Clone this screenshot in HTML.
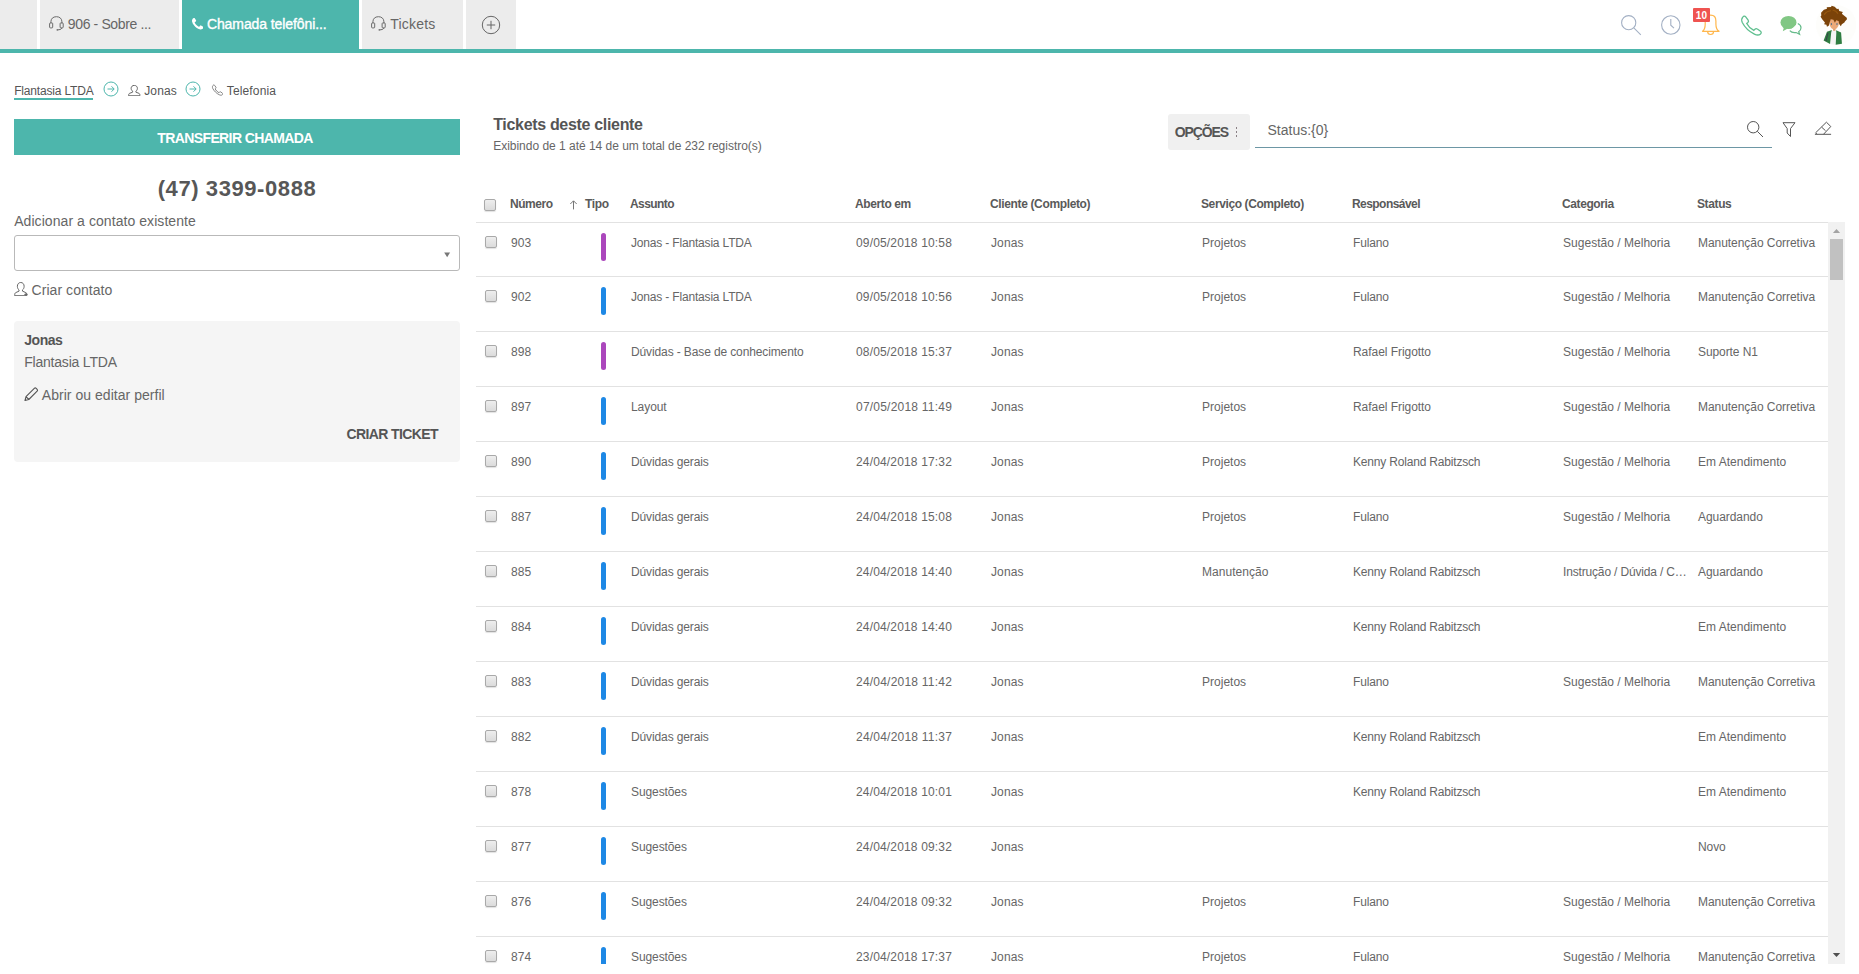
<!DOCTYPE html>
<html lang="pt-BR"><head><meta charset="utf-8"><title>Chamada telefônica</title>
<style>
html,body{margin:0;padding:0;background:#fff}
body{width:1859px;height:974px;position:relative;overflow:hidden;font-family:"Liberation Sans",sans-serif}
.t{position:absolute;white-space:nowrap}
</style></head><body>
<div style="position:absolute;left:0px;top:0px;width:37px;height:49px;background:#ececec;"></div>
<div style="position:absolute;left:40px;top:0px;width:139px;height:49px;background:#ececec;"></div>
<div style="position:absolute;left:182px;top:0px;width:177px;height:49px;background:#4db6ac;"></div>
<div style="position:absolute;left:362px;top:0px;width:101px;height:49px;background:#ececec;"></div>
<div style="position:absolute;left:466px;top:0px;width:50px;height:49px;background:#ececec;"></div>
<div style="position:absolute;left:0px;top:49px;width:1859px;height:4px;background:#4db6ac;"></div>
<svg style="position:absolute;left:49.4px;top:15.8px;" width="15" height="15" viewBox="0 0 15 15" fill="none"><path d="M1.900 7.300V5.800C1.900 2.700 4 0.700 7.400 0.700S12.900 2.700 12.900 5.800V7.300" stroke="#6a6a6a" stroke-width="1"/><rect x="0.600" y="6.900" width="3.100" height="5" rx="0.800" stroke="#6a6a6a" stroke-width="1"/><rect x="11.100" y="6.900" width="3.100" height="5" rx="0.800" stroke="#6a6a6a" stroke-width="1"/><path d="M12.900 11.900q-0.500 2-4 2" stroke="#6a6a6a" stroke-width="1"/><circle cx="8.300" cy="13.900" r="0.800" fill="#6a6a6a"/></svg>
<span class="t" id="t1" style="left:67.8px;top:14.15px;font-size:14px;line-height:20px;color:#666;letter-spacing:-0.366px;">906 - Sobre ...</span>
<svg style="position:absolute;left:191.5px;top:18px;" width="11.5" height="11.5" viewBox="192 128 1408 1408" fill="none"><path d="M1600 1240q0 27-10 70.500t-21 68.500q-21 50-122 106-94 51-186 51-27 0-53-3.500t-57.500-12.500-47-14.500-55.500-20.500-49-18q-98-35-175-83-127-79-264-216t-216-264q-48-77-83-175-3-9-18-49t-20.500-55.500-14.500-47-12.500-57.500-3.500-53q0-92 51-186 56-101 106-122 25-11 68.500-21t70.500-10q14 0 21 3 18 6 53 76 11 19 30 54t35 63.500 31 53.500q3 4 17.500 25t21.500 35.500 7 28.500q0 20-28.500 50t-62 55-62 53-28.500 46q0 9 5 22.500t8.500 20.500 14 24 11.500 19q76 137 174 235t235 174q2 1 19 11.500t24 14 20.500 8.500 22.500 5q18 0 46-28.500t53-62 55-62 50-28.500q14 0 28.500 7t35.500 21.500 25 17.500q25 15 53.500 31t63.500 35 54 30q70 35 76 53 3 7 3 21z" fill="#fff"/></svg>
<span class="t" id="t2" style="left:206.9px;top:14.15px;font-size:14px;line-height:20px;color:#fff;letter-spacing:-0.089px;-webkit-text-stroke:0.35px #fff;">Chamada telefôni...</span>
<svg style="position:absolute;left:371.4px;top:15.8px;" width="15" height="15" viewBox="0 0 15 15" fill="none"><path d="M1.900 7.300V5.800C1.900 2.700 4 0.700 7.400 0.700S12.900 2.700 12.900 5.800V7.300" stroke="#6a6a6a" stroke-width="1"/><rect x="0.600" y="6.900" width="3.100" height="5" rx="0.800" stroke="#6a6a6a" stroke-width="1"/><rect x="11.100" y="6.900" width="3.100" height="5" rx="0.800" stroke="#6a6a6a" stroke-width="1"/><path d="M12.900 11.900q-0.500 2-4 2" stroke="#6a6a6a" stroke-width="1"/><circle cx="8.300" cy="13.900" r="0.800" fill="#6a6a6a"/></svg>
<span class="t" id="t3" style="left:390.3px;top:14.15px;font-size:14px;line-height:20px;color:#666;letter-spacing:0.208px;">Tickets</span>
<svg style="position:absolute;left:480px;top:14px;" width="22" height="22" viewBox="0 0 22 22" fill="none"><circle cx="11" cy="11" r="8.7" stroke="#666" stroke-width="1"/><path d="M11 6.8v8.4M6.8 11h8.400" stroke="#666" stroke-width="1"/></svg>
<svg style="position:absolute;left:1619px;top:13px;" width="24" height="24" viewBox="0 0 24 24" fill="none"><circle cx="9.700" cy="9.700" r="7.100" stroke="#a3b0c4" stroke-width="1.100"/><path d="M14.800 14.800L21.800 21.800" stroke="#a3b0c4" stroke-width="1.100"/></svg>
<svg style="position:absolute;left:1659px;top:13px;" width="24" height="24" viewBox="0 0 24 24" fill="none"><circle cx="11.800" cy="12" r="9.200" stroke="#a3b0c4" stroke-width="1.100"/><path d="M11.800 6v6.200l3.200 3" stroke="#a3b0c4" stroke-width="1.100"/></svg>
<svg style="position:absolute;left:1699px;top:13px;" width="24" height="24" viewBox="0 0 24 24" fill="none"><path d="M3.500 18.300C5.500 17 6.200 15 6.200 11V8C6.200 4.500 8.500 2.200 11.600 2.200S16.900 4.500 16.900 8V11C16.900 15 17.600 17 20.100 18.300Z" stroke="#ffb74d" stroke-width="1.200" stroke-linejoin="round"/><path d="M8.600 18.500a3 3 0 0 0 6 0" stroke="#ffb74d" stroke-width="1.200"/></svg>
<div style="position:absolute;left:1693px;top:8px;width:17px;height:14px;background:#ef5350;border-radius:1px;"></div>
<span class="t" id="t4" style="left:1701.5px;top:8.54px;font-size:10px;line-height:14px;color:#fff;font-weight:700;letter-spacing:0.180px;transform:translateX(-50%);">10</span>
<svg style="position:absolute;left:1739px;top:13px;" width="24" height="24" viewBox="0 0 24 24" fill="none"><path d="M3.500 3.500c1-1.300 2.300-1.400 3.200-0.300l2.600 3.600c0.700 1 0.500 1.800-0.300 2.600l-1.200 1.100c1.600 3.200 4.300 5.800 7.600 7.600l1.200-1.300c0.800-0.800 1.700-0.900 2.600-0.200l3.400 2.500c1.100 0.900 1 2.200-0.300 3.200-1.600 1.300-3.600 1.200-6.300-0.100C10.500 19.500 5.500 14.500 3 9.500 2 7 2.200 5 3.500 3.500z" stroke="#5fbf8f" stroke-width="1.400" transform="translate(0.500 0.900) scale(0.930 0.910)"/></svg>
<svg style="position:absolute;left:1779px;top:13px;" width="24" height="24" viewBox="0 0 24 24" fill="none"><ellipse cx="9.500" cy="9.500" rx="8" ry="6.600" fill="#81c784"/><path d="M5 14l-1.200 4.200 5-2.800z" fill="#81c784"/><path d="M18.800 10.500c2.200 1 3.200 2.600 3.200 4.300 0 1.700-0.900 3-2.300 3.900l0.900 2.600-3.500-1.800c-2.500 0.400-5-0.300-6.300-1.900" stroke="#66bb8a" stroke-width="1.200" fill="#fff"/></svg>
<svg style="position:absolute;left:1809px;top:0px;" width="50" height="50" viewBox="0 0 974 974" fill="none"><circle cx="527" cy="487" r="392" fill="#fdfdfb"/><path d="M470 560h45v70h-45z" fill="#dc9866"/><polygon points="440,600 530,600 520,870 410,855" fill="#f4f4f4"/><polygon points="445,585 350,620 285,790 410,855 432,640" fill="#2f7d42"/><polygon points="528,590 625,635 642,850 520,872 532,640" fill="#2f7d42"/><path d="M370 640L330 800" stroke="#3a3a4a" stroke-width="18"/><path d="M395 440c0-60 40-90 95-90s95 30 95 90c0 70-45 135-95 135s-95-65-95-135z" fill="#eba97a"/><ellipse cx="437" cy="468" rx="13" ry="22" fill="#56748c"/><ellipse cx="545" cy="468" rx="13" ry="22" fill="#56748c"/><polygon points="235,250 290,190 350,170 345,140 430,135 440,110 500,130 545,175 575,170 590,215 660,235 640,270 735,345 740,375 700,420 690,440 640,470 620,510 590,470 575,410 530,395 505,445 475,385 425,375 405,430 385,500 350,520 340,480 295,470 310,440 260,380 235,340 225,320 240,300" fill="#7b4309"/><path d="M300 280q40-60 120-70M470 200q60 10 90 60" stroke="#96570f" stroke-width="22" stroke-linecap="round"/></svg>
<span class="t" id="t5" style="left:14.2px;top:83.34px;font-size:12px;line-height:17px;color:#555;letter-spacing:-0.174px;">Flantasia LTDA</span>
<div style="position:absolute;left:14px;top:98px;width:79px;height:2px;background:#4db6ac;"></div>
<svg style="position:absolute;left:102.8px;top:80.8px;" width="16" height="16" viewBox="0 0 16 16" fill="none"><circle cx="8" cy="8" r="7" stroke="#4db6ac" stroke-width="1"/><path d="M4.500 8h6.500M8.500 5.300L11.200 8 8.500 10.700" stroke="#4db6ac" stroke-width="1"/></svg>
<svg style="position:absolute;left:127.8px;top:84.7px;" width="12.8" height="11.3" viewBox="0 0 14.300 14.500" preserveAspectRatio="none" fill="none"><path d="M7 0.500C9.200 0.500 10.500 2.200 10.500 4.300C10.500 6 9.700 7.400 8.800 8V9.200L12.200 10.700C13 11.100 13.300 11.800 13.300 13.800H0.700C0.700 11.800 1 11.100 1.800 10.700L5.200 9.200V8C4.300 7.400 3.500 6 3.500 4.300C3.500 2.200 4.800 0.500 7 0.500Z" stroke="#666" stroke-width="1" vector-effect="non-scaling-stroke"/></svg>
<span class="t" id="t6" style="left:144.2px;top:83.34px;font-size:12px;line-height:17px;color:#555;letter-spacing:0.156px;">Jonas</span>
<svg style="position:absolute;left:185.4px;top:80.8px;" width="16" height="16" viewBox="0 0 16 16" fill="none"><circle cx="8" cy="8" r="7" stroke="#4db6ac" stroke-width="1"/><path d="M4.500 8h6.500M8.500 5.300L11.200 8 8.500 10.700" stroke="#4db6ac" stroke-width="1"/></svg>
<svg style="position:absolute;left:210.8px;top:84px;" width="12.5" height="12.5" viewBox="0 0 24 24" fill="none"><path d="M3.500 3.500c1-1.300 2.300-1.400 3.200-0.300l2.600 3.600c0.700 1 0.500 1.800-0.300 2.600l-1.200 1.100c1.600 3.200 4.300 5.800 7.600 7.600l1.200-1.300c0.800-0.800 1.700-0.900 2.600-0.200l3.400 2.500c1.100 0.900 1 2.200-0.300 3.200-1.600 1.300-3.600 1.200-6.300-0.100C10.500 19.500 5.500 14.500 3 9.500 2 7 2.200 5 3.500 3.500z" stroke="#777" stroke-width="1.800" transform="translate(0.500 -0.500) scale(0.95)"/></svg>
<span class="t" id="t7" style="left:226.8px;top:83.34px;font-size:12px;line-height:17px;color:#555;letter-spacing:0.141px;">Telefonia</span>
<div style="position:absolute;left:14px;top:119px;width:446px;height:36px;background:#4db6ac;"></div>
<span class="t" id="t8" style="left:235px;top:128.05px;font-size:14px;line-height:20px;color:#fff;font-weight:700;letter-spacing:-0.616px;transform:translateX(-50%);">TRANSFERIR CHAMADA</span>
<span class="t" id="t9" style="left:237px;top:172.88px;font-size:22px;line-height:31px;color:#575757;font-weight:700;letter-spacing:0.581px;transform:translateX(-50%);">(47) 3399-0888</span>
<span class="t" id="t10" style="left:14.2px;top:211.15px;font-size:14px;line-height:20px;color:#666;letter-spacing:0.066px;">Adicionar a contato existente</span>
<div style="position:absolute;left:14px;top:235px;width:444px;height:34px;border:1px solid #b9b9b9;border-radius:3px;background:#fff"></div>
<svg style="position:absolute;left:444px;top:252px;" width="7" height="6" viewBox="0 0 7 6" fill="none"><polygon points="0.200,0.400 6.100,0.400 3.150,5.200" fill="#777"/></svg>
<svg style="position:absolute;left:14px;top:281.7px;" width="13.8" height="14.4" viewBox="0 0 14.300 14.500" preserveAspectRatio="none" fill="none"><path d="M7 0.500C9.200 0.500 10.500 2.200 10.500 4.300C10.500 6 9.700 7.400 8.800 8V9.200L12.200 10.700C13 11.100 13.300 11.800 13.300 13.800H0.700C0.700 11.800 1 11.100 1.800 10.700L5.200 9.200V8C4.300 7.400 3.500 6 3.500 4.300C3.500 2.200 4.800 0.500 7 0.500Z" stroke="#666" stroke-width="1" vector-effect="non-scaling-stroke"/><path d="M12.400 10.800v3.400M10.700 12.500h3.400" stroke="#666" stroke-width="1" vector-effect="non-scaling-stroke"/><path d="M10.200 13.800h3.600" stroke="#fff" stroke-width="0"/></svg>
<span class="t" id="t11" style="left:31.6px;top:280.15px;font-size:14px;line-height:20px;color:#666;letter-spacing:0.047px;">Criar contato</span>
<div style="position:absolute;left:14px;top:321px;width:446px;height:141px;background:#f5f5f5;border-radius:4px;"></div>
<span class="t" id="t12" style="left:24.2px;top:330.15px;font-size:14px;line-height:20px;color:#555;font-weight:700;letter-spacing:-0.441px;">Jonas</span>
<span class="t" id="t13" style="left:24.2px;top:352.15px;font-size:14px;line-height:20px;color:#666;letter-spacing:-0.204px;">Flantasia LTDA</span>
<svg style="position:absolute;left:24px;top:387px;" width="14.5" height="14.5" viewBox="0 0 14.500 14.500" fill="none"><path d="M1 13.500l1-3.800 8.300-8.300c0.600-0.600 1.300-0.600 1.900 0l0.900 0.900c0.600 0.600 0.600 1.300 0 1.900L4.800 12.500z M2 9.700l2.800 2.800" stroke="#555" stroke-width="1.100" stroke-linejoin="round"/></svg>
<span class="t" id="t14" style="left:41.8px;top:385.15px;font-size:14px;line-height:20px;color:#666;letter-spacing:0.032px;">Abrir ou editar perfil</span>
<span class="t" id="t15" style="left:346.5px;top:424.15px;font-size:14px;line-height:20px;color:#555;font-weight:700;letter-spacing:-0.618px;">CRIAR TICKET</span>
<span class="t" id="t16" style="left:493.2px;top:113.96px;font-size:16px;line-height:22px;color:#555;font-weight:700;letter-spacing:-0.321px;">Tickets deste cliente</span>
<span class="t" id="t17" style="left:493.2px;top:138.34px;font-size:12px;line-height:17px;color:#666;letter-spacing:-0.018px;">Exibindo de 1 até 14 de um total de 232 registro(s)</span>
<div style="position:absolute;left:1168px;top:114px;width:82px;height:36px;background:#f0f0f0;border-radius:3px;"></div>
<span class="t" id="t18" style="left:1174.8px;top:122.15px;font-size:14px;line-height:20px;color:#555;font-weight:700;letter-spacing:-1.141px;">OPÇÕES</span>
<div style="position:absolute;left:1236px;top:127.2px;width:1px;height:1.6px;background:#8a8085;"></div>
<div style="position:absolute;left:1236px;top:131.2px;width:1px;height:1.6px;background:#8a8085;"></div>
<div style="position:absolute;left:1236px;top:135.2px;width:1px;height:1.6px;background:#8a8085;"></div>
<div style="position:absolute;left:1255px;top:147px;width:517px;height:1px;background:#6d97a5;"></div>
<span class="t" id="t19" style="left:1267.5px;top:120.15px;font-size:14px;line-height:20px;color:#666;letter-spacing:0.005px;">Status:{0}</span>
<svg style="position:absolute;left:1746px;top:120px;" width="18" height="18" viewBox="0 0 18 18" fill="none"><circle cx="7.200" cy="7.200" r="5.700" stroke="#555" stroke-width="1"/><path d="M11.300 11.300L17 17" stroke="#555" stroke-width="1"/></svg>
<svg style="position:absolute;left:1781px;top:122px;" width="16" height="16" viewBox="0 0 16 16" fill="none"><path d="M2 0.700H14L9.500 6.600V14.500L6.200 11V6.600Z" stroke="#555" stroke-width="1" stroke-linejoin="round"/></svg>
<svg style="position:absolute;left:1814px;top:120px;" width="18" height="17" viewBox="0 0 18 17" fill="none"><path d="M0.900 14.300H17.100M9.500 14.300L16.800 6.500 12.400 2.200 1.600 12.800 3.100 14.300M7.700 7.200L11.500 10.700" stroke="#555" stroke-width="1" stroke-linejoin="round"/></svg>
<div style="position:absolute;left:484px;top:199px;width:10px;height:10px;border:1px solid #a9a9a9;border-radius:2px;background:linear-gradient(#eeeeee,#dbdbdb);box-shadow:0 1px 1px rgba(0,0,0,0.12)"></div>
<span class="t" id="t20" style="left:510px;top:195.64px;font-size:12px;line-height:17px;color:#5a5a5a;font-weight:700;letter-spacing:-0.466px;">Número</span>
<svg style="position:absolute;left:568px;top:198px;" width="11" height="12" viewBox="0 0 11 12" fill="none"><path d="M5.500 11.400V3M2.300 6L5.500 2.800 8.700 6" stroke="#777" stroke-width="1"/></svg>
<span class="t" id="t21" style="left:585px;top:195.64px;font-size:12px;line-height:17px;color:#5a5a5a;font-weight:700;letter-spacing:-0.315px;">Tipo</span>
<span class="t" id="t22" style="left:630px;top:195.64px;font-size:12px;line-height:17px;color:#5a5a5a;font-weight:700;letter-spacing:-0.574px;">Assunto</span>
<span class="t" id="t23" style="left:855px;top:195.64px;font-size:12px;line-height:17px;color:#5a5a5a;font-weight:700;letter-spacing:-0.390px;">Aberto em</span>
<span class="t" id="t24" style="left:990px;top:195.64px;font-size:12px;line-height:17px;color:#5a5a5a;font-weight:700;letter-spacing:-0.358px;">Cliente (Completo)</span>
<span class="t" id="t25" style="left:1201px;top:195.64px;font-size:12px;line-height:17px;color:#5a5a5a;font-weight:700;letter-spacing:-0.396px;">Serviço (Completo)</span>
<span class="t" id="t26" style="left:1352px;top:195.64px;font-size:12px;line-height:17px;color:#5a5a5a;font-weight:700;letter-spacing:-0.557px;">Responsável</span>
<span class="t" id="t27" style="left:1562px;top:195.64px;font-size:12px;line-height:17px;color:#5a5a5a;font-weight:700;letter-spacing:-0.395px;">Categoria</span>
<span class="t" id="t28" style="left:1697px;top:195.64px;font-size:12px;line-height:17px;color:#5a5a5a;font-weight:700;letter-spacing:-0.380px;">Status</span>
<div style="position:absolute;left:476px;top:222px;width:1352px;height:1px;background:#e2e2e2;"></div>
<div style="position:absolute;left:0;top:223px;width:1859px;height:741px;overflow:hidden">
<div style="position:absolute;left:476px;top:53px;width:1352px;height:1px;background:#e2e2e2;"></div>
<div style="position:absolute;left:485px;top:13px;width:10px;height:10px;border:1px solid #a9a9a9;border-radius:2px;background:linear-gradient(#eeeeee,#dbdbdb);box-shadow:0 1px 1px rgba(0,0,0,0.12)"></div>
<div style="position:absolute;left:601px;top:10px;width:5px;height:28px;background:#ab47bc;border-radius:2.500px;"></div>
<span class="t" id="t29" style="left:511px;top:12.14px;font-size:12px;line-height:17px;color:#666;letter-spacing:0.020px;">903</span>
<span class="t" id="t30" style="left:631px;top:12.14px;font-size:12px;line-height:17px;color:#666;letter-spacing:-0.177px;">Jonas - Flantasia LTDA</span>
<span class="t" id="t31" style="left:856px;top:12.14px;font-size:12px;line-height:17px;color:#666;letter-spacing:0.164px;">09/05/2018 10:58</span>
<span class="t" id="t32" style="left:991px;top:12.14px;font-size:12px;line-height:17px;color:#666;letter-spacing:0.110px;">Jonas</span>
<span class="t" id="t33" style="left:1202px;top:12.14px;font-size:12px;line-height:17px;color:#666;letter-spacing:0.014px;">Projetos</span>
<span class="t" id="t34" style="left:1353px;top:12.14px;font-size:12px;line-height:17px;color:#666;letter-spacing:-0.151px;">Fulano</span>
<span class="t" id="t35" style="left:1563px;top:12.14px;font-size:12px;line-height:17px;color:#666;letter-spacing:0.025px;">Sugestão / Melhoria</span>
<span class="t" id="t36" style="left:1698px;top:12.14px;font-size:12px;line-height:17px;color:#666;letter-spacing:-0.048px;">Manutenção Corretiva</span>
<div style="position:absolute;left:476px;top:108px;width:1352px;height:1px;background:#e2e2e2;"></div>
<div style="position:absolute;left:485px;top:67px;width:10px;height:10px;border:1px solid #a9a9a9;border-radius:2px;background:linear-gradient(#eeeeee,#dbdbdb);box-shadow:0 1px 1px rgba(0,0,0,0.12)"></div>
<div style="position:absolute;left:601px;top:64px;width:5px;height:28px;background:#1e88e5;border-radius:2.500px;"></div>
<span class="t" id="t37" style="left:511px;top:66.14px;font-size:12px;line-height:17px;color:#666;letter-spacing:0.020px;">902</span>
<span class="t" id="t38" style="left:631px;top:66.14px;font-size:12px;line-height:17px;color:#666;letter-spacing:-0.177px;">Jonas - Flantasia LTDA</span>
<span class="t" id="t39" style="left:856px;top:66.14px;font-size:12px;line-height:17px;color:#666;letter-spacing:0.164px;">09/05/2018 10:56</span>
<span class="t" id="t40" style="left:991px;top:66.14px;font-size:12px;line-height:17px;color:#666;letter-spacing:0.110px;">Jonas</span>
<span class="t" id="t41" style="left:1202px;top:66.14px;font-size:12px;line-height:17px;color:#666;letter-spacing:0.014px;">Projetos</span>
<span class="t" id="t42" style="left:1353px;top:66.14px;font-size:12px;line-height:17px;color:#666;letter-spacing:-0.151px;">Fulano</span>
<span class="t" id="t43" style="left:1563px;top:66.14px;font-size:12px;line-height:17px;color:#666;letter-spacing:0.025px;">Sugestão / Melhoria</span>
<span class="t" id="t44" style="left:1698px;top:66.14px;font-size:12px;line-height:17px;color:#666;letter-spacing:-0.048px;">Manutenção Corretiva</span>
<div style="position:absolute;left:476px;top:163px;width:1352px;height:1px;background:#e2e2e2;"></div>
<div style="position:absolute;left:485px;top:122px;width:10px;height:10px;border:1px solid #a9a9a9;border-radius:2px;background:linear-gradient(#eeeeee,#dbdbdb);box-shadow:0 1px 1px rgba(0,0,0,0.12)"></div>
<div style="position:absolute;left:601px;top:119px;width:5px;height:28px;background:#ab47bc;border-radius:2.500px;"></div>
<span class="t" id="t45" style="left:511px;top:121.14px;font-size:12px;line-height:17px;color:#666;letter-spacing:0.020px;">898</span>
<span class="t" id="t46" style="left:631px;top:121.14px;font-size:12px;line-height:17px;color:#666;letter-spacing:-0.120px;">Dúvidas - Base de conhecimento</span>
<span class="t" id="t47" style="left:856px;top:121.14px;font-size:12px;line-height:17px;color:#666;letter-spacing:0.164px;">08/05/2018 15:37</span>
<span class="t" id="t48" style="left:991px;top:121.14px;font-size:12px;line-height:17px;color:#666;letter-spacing:0.110px;">Jonas</span>
<span class="t" id="t49" style="left:1353px;top:121.14px;font-size:12px;line-height:17px;color:#666;letter-spacing:-0.049px;">Rafael Frigotto</span>
<span class="t" id="t50" style="left:1563px;top:121.14px;font-size:12px;line-height:17px;color:#666;letter-spacing:0.025px;">Sugestão / Melhoria</span>
<span class="t" id="t51" style="left:1698px;top:121.14px;font-size:12px;line-height:17px;color:#666;letter-spacing:-0.086px;">Suporte N1</span>
<div style="position:absolute;left:476px;top:218px;width:1352px;height:1px;background:#e2e2e2;"></div>
<div style="position:absolute;left:485px;top:177px;width:10px;height:10px;border:1px solid #a9a9a9;border-radius:2px;background:linear-gradient(#eeeeee,#dbdbdb);box-shadow:0 1px 1px rgba(0,0,0,0.12)"></div>
<div style="position:absolute;left:601px;top:174px;width:5px;height:28px;background:#1e88e5;border-radius:2.500px;"></div>
<span class="t" id="t52" style="left:511px;top:176.14px;font-size:12px;line-height:17px;color:#666;letter-spacing:0.020px;">897</span>
<span class="t" id="t53" style="left:631px;top:176.14px;font-size:12px;line-height:17px;color:#666;letter-spacing:-0.065px;">Layout</span>
<span class="t" id="t54" style="left:856px;top:176.14px;font-size:12px;line-height:17px;color:#666;letter-spacing:0.219px;">07/05/2018 11:49</span>
<span class="t" id="t55" style="left:991px;top:176.14px;font-size:12px;line-height:17px;color:#666;letter-spacing:0.110px;">Jonas</span>
<span class="t" id="t56" style="left:1202px;top:176.14px;font-size:12px;line-height:17px;color:#666;letter-spacing:0.014px;">Projetos</span>
<span class="t" id="t57" style="left:1353px;top:176.14px;font-size:12px;line-height:17px;color:#666;letter-spacing:-0.049px;">Rafael Frigotto</span>
<span class="t" id="t58" style="left:1563px;top:176.14px;font-size:12px;line-height:17px;color:#666;letter-spacing:0.025px;">Sugestão / Melhoria</span>
<span class="t" id="t59" style="left:1698px;top:176.14px;font-size:12px;line-height:17px;color:#666;letter-spacing:-0.048px;">Manutenção Corretiva</span>
<div style="position:absolute;left:476px;top:273px;width:1352px;height:1px;background:#e2e2e2;"></div>
<div style="position:absolute;left:485px;top:232px;width:10px;height:10px;border:1px solid #a9a9a9;border-radius:2px;background:linear-gradient(#eeeeee,#dbdbdb);box-shadow:0 1px 1px rgba(0,0,0,0.12)"></div>
<div style="position:absolute;left:601px;top:229px;width:5px;height:28px;background:#1e88e5;border-radius:2.500px;"></div>
<span class="t" id="t60" style="left:511px;top:231.14px;font-size:12px;line-height:17px;color:#666;letter-spacing:0.020px;">890</span>
<span class="t" id="t61" style="left:631px;top:231.14px;font-size:12px;line-height:17px;color:#666;letter-spacing:-0.118px;">Dúvidas gerais</span>
<span class="t" id="t62" style="left:856px;top:231.14px;font-size:12px;line-height:17px;color:#666;letter-spacing:0.164px;">24/04/2018 17:32</span>
<span class="t" id="t63" style="left:991px;top:231.14px;font-size:12px;line-height:17px;color:#666;letter-spacing:0.110px;">Jonas</span>
<span class="t" id="t64" style="left:1202px;top:231.14px;font-size:12px;line-height:17px;color:#666;letter-spacing:0.014px;">Projetos</span>
<span class="t" id="t65" style="left:1353px;top:231.14px;font-size:12px;line-height:17px;color:#666;letter-spacing:-0.185px;">Kenny Roland Rabitzsch</span>
<span class="t" id="t66" style="left:1563px;top:231.14px;font-size:12px;line-height:17px;color:#666;letter-spacing:0.025px;">Sugestão / Melhoria</span>
<span class="t" id="t67" style="left:1698px;top:231.14px;font-size:12px;line-height:17px;color:#666;letter-spacing:0.010px;">Em Atendimento</span>
<div style="position:absolute;left:476px;top:328px;width:1352px;height:1px;background:#e2e2e2;"></div>
<div style="position:absolute;left:485px;top:287px;width:10px;height:10px;border:1px solid #a9a9a9;border-radius:2px;background:linear-gradient(#eeeeee,#dbdbdb);box-shadow:0 1px 1px rgba(0,0,0,0.12)"></div>
<div style="position:absolute;left:601px;top:284px;width:5px;height:28px;background:#1e88e5;border-radius:2.500px;"></div>
<span class="t" id="t68" style="left:511px;top:286.14px;font-size:12px;line-height:17px;color:#666;letter-spacing:0.020px;">887</span>
<span class="t" id="t69" style="left:631px;top:286.14px;font-size:12px;line-height:17px;color:#666;letter-spacing:-0.118px;">Dúvidas gerais</span>
<span class="t" id="t70" style="left:856px;top:286.14px;font-size:12px;line-height:17px;color:#666;letter-spacing:0.164px;">24/04/2018 15:08</span>
<span class="t" id="t71" style="left:991px;top:286.14px;font-size:12px;line-height:17px;color:#666;letter-spacing:0.110px;">Jonas</span>
<span class="t" id="t72" style="left:1202px;top:286.14px;font-size:12px;line-height:17px;color:#666;letter-spacing:0.014px;">Projetos</span>
<span class="t" id="t73" style="left:1353px;top:286.14px;font-size:12px;line-height:17px;color:#666;letter-spacing:-0.151px;">Fulano</span>
<span class="t" id="t74" style="left:1563px;top:286.14px;font-size:12px;line-height:17px;color:#666;letter-spacing:0.025px;">Sugestão / Melhoria</span>
<span class="t" id="t75" style="left:1698px;top:286.14px;font-size:12px;line-height:17px;color:#666;letter-spacing:-0.064px;">Aguardando</span>
<div style="position:absolute;left:476px;top:383px;width:1352px;height:1px;background:#e2e2e2;"></div>
<div style="position:absolute;left:485px;top:342px;width:10px;height:10px;border:1px solid #a9a9a9;border-radius:2px;background:linear-gradient(#eeeeee,#dbdbdb);box-shadow:0 1px 1px rgba(0,0,0,0.12)"></div>
<div style="position:absolute;left:601px;top:339px;width:5px;height:28px;background:#1e88e5;border-radius:2.500px;"></div>
<span class="t" id="t76" style="left:511px;top:341.14px;font-size:12px;line-height:17px;color:#666;letter-spacing:0.020px;">885</span>
<span class="t" id="t77" style="left:631px;top:341.14px;font-size:12px;line-height:17px;color:#666;letter-spacing:-0.118px;">Dúvidas gerais</span>
<span class="t" id="t78" style="left:856px;top:341.14px;font-size:12px;line-height:17px;color:#666;letter-spacing:0.164px;">24/04/2018 14:40</span>
<span class="t" id="t79" style="left:991px;top:341.14px;font-size:12px;line-height:17px;color:#666;letter-spacing:0.110px;">Jonas</span>
<span class="t" id="t80" style="left:1202px;top:341.14px;font-size:12px;line-height:17px;color:#666;letter-spacing:0.031px;">Manutenção</span>
<span class="t" id="t81" style="left:1353px;top:341.14px;font-size:12px;line-height:17px;color:#666;letter-spacing:-0.185px;">Kenny Roland Rabitzsch</span>
<span class="t" id="t82" style="left:1563px;top:341.14px;font-size:12px;line-height:17px;color:#666;letter-spacing:-0.163px;">Instrução / Dúvida / C…</span>
<span class="t" id="t83" style="left:1698px;top:341.14px;font-size:12px;line-height:17px;color:#666;letter-spacing:-0.064px;">Aguardando</span>
<div style="position:absolute;left:476px;top:438px;width:1352px;height:1px;background:#e2e2e2;"></div>
<div style="position:absolute;left:485px;top:397px;width:10px;height:10px;border:1px solid #a9a9a9;border-radius:2px;background:linear-gradient(#eeeeee,#dbdbdb);box-shadow:0 1px 1px rgba(0,0,0,0.12)"></div>
<div style="position:absolute;left:601px;top:394px;width:5px;height:28px;background:#1e88e5;border-radius:2.500px;"></div>
<span class="t" id="t84" style="left:511px;top:396.14px;font-size:12px;line-height:17px;color:#666;letter-spacing:0.020px;">884</span>
<span class="t" id="t85" style="left:631px;top:396.14px;font-size:12px;line-height:17px;color:#666;letter-spacing:-0.118px;">Dúvidas gerais</span>
<span class="t" id="t86" style="left:856px;top:396.14px;font-size:12px;line-height:17px;color:#666;letter-spacing:0.164px;">24/04/2018 14:40</span>
<span class="t" id="t87" style="left:991px;top:396.14px;font-size:12px;line-height:17px;color:#666;letter-spacing:0.110px;">Jonas</span>
<span class="t" id="t88" style="left:1353px;top:396.14px;font-size:12px;line-height:17px;color:#666;letter-spacing:-0.185px;">Kenny Roland Rabitzsch</span>
<span class="t" id="t89" style="left:1698px;top:396.14px;font-size:12px;line-height:17px;color:#666;letter-spacing:0.010px;">Em Atendimento</span>
<div style="position:absolute;left:476px;top:493px;width:1352px;height:1px;background:#e2e2e2;"></div>
<div style="position:absolute;left:485px;top:452px;width:10px;height:10px;border:1px solid #a9a9a9;border-radius:2px;background:linear-gradient(#eeeeee,#dbdbdb);box-shadow:0 1px 1px rgba(0,0,0,0.12)"></div>
<div style="position:absolute;left:601px;top:449px;width:5px;height:28px;background:#1e88e5;border-radius:2.500px;"></div>
<span class="t" id="t90" style="left:511px;top:451.14px;font-size:12px;line-height:17px;color:#666;letter-spacing:0.020px;">883</span>
<span class="t" id="t91" style="left:631px;top:451.14px;font-size:12px;line-height:17px;color:#666;letter-spacing:-0.118px;">Dúvidas gerais</span>
<span class="t" id="t92" style="left:856px;top:451.14px;font-size:12px;line-height:17px;color:#666;letter-spacing:0.219px;">24/04/2018 11:42</span>
<span class="t" id="t93" style="left:991px;top:451.14px;font-size:12px;line-height:17px;color:#666;letter-spacing:0.110px;">Jonas</span>
<span class="t" id="t94" style="left:1202px;top:451.14px;font-size:12px;line-height:17px;color:#666;letter-spacing:0.014px;">Projetos</span>
<span class="t" id="t95" style="left:1353px;top:451.14px;font-size:12px;line-height:17px;color:#666;letter-spacing:-0.151px;">Fulano</span>
<span class="t" id="t96" style="left:1563px;top:451.14px;font-size:12px;line-height:17px;color:#666;letter-spacing:0.025px;">Sugestão / Melhoria</span>
<span class="t" id="t97" style="left:1698px;top:451.14px;font-size:12px;line-height:17px;color:#666;letter-spacing:-0.048px;">Manutenção Corretiva</span>
<div style="position:absolute;left:476px;top:548px;width:1352px;height:1px;background:#e2e2e2;"></div>
<div style="position:absolute;left:485px;top:507px;width:10px;height:10px;border:1px solid #a9a9a9;border-radius:2px;background:linear-gradient(#eeeeee,#dbdbdb);box-shadow:0 1px 1px rgba(0,0,0,0.12)"></div>
<div style="position:absolute;left:601px;top:504px;width:5px;height:28px;background:#1e88e5;border-radius:2.500px;"></div>
<span class="t" id="t98" style="left:511px;top:506.14px;font-size:12px;line-height:17px;color:#666;letter-spacing:0.020px;">882</span>
<span class="t" id="t99" style="left:631px;top:506.14px;font-size:12px;line-height:17px;color:#666;letter-spacing:-0.118px;">Dúvidas gerais</span>
<span class="t" id="t100" style="left:856px;top:506.14px;font-size:12px;line-height:17px;color:#666;letter-spacing:0.219px;">24/04/2018 11:37</span>
<span class="t" id="t101" style="left:991px;top:506.14px;font-size:12px;line-height:17px;color:#666;letter-spacing:0.110px;">Jonas</span>
<span class="t" id="t102" style="left:1353px;top:506.14px;font-size:12px;line-height:17px;color:#666;letter-spacing:-0.185px;">Kenny Roland Rabitzsch</span>
<span class="t" id="t103" style="left:1698px;top:506.14px;font-size:12px;line-height:17px;color:#666;letter-spacing:0.010px;">Em Atendimento</span>
<div style="position:absolute;left:476px;top:603px;width:1352px;height:1px;background:#e2e2e2;"></div>
<div style="position:absolute;left:485px;top:562px;width:10px;height:10px;border:1px solid #a9a9a9;border-radius:2px;background:linear-gradient(#eeeeee,#dbdbdb);box-shadow:0 1px 1px rgba(0,0,0,0.12)"></div>
<div style="position:absolute;left:601px;top:559px;width:5px;height:28px;background:#1e88e5;border-radius:2.500px;"></div>
<span class="t" id="t104" style="left:511px;top:561.14px;font-size:12px;line-height:17px;color:#666;letter-spacing:0.020px;">878</span>
<span class="t" id="t105" style="left:631px;top:561.14px;font-size:12px;line-height:17px;color:#666;letter-spacing:-0.096px;">Sugestões</span>
<span class="t" id="t106" style="left:856px;top:561.14px;font-size:12px;line-height:17px;color:#666;letter-spacing:0.164px;">24/04/2018 10:01</span>
<span class="t" id="t107" style="left:991px;top:561.14px;font-size:12px;line-height:17px;color:#666;letter-spacing:0.110px;">Jonas</span>
<span class="t" id="t108" style="left:1353px;top:561.14px;font-size:12px;line-height:17px;color:#666;letter-spacing:-0.185px;">Kenny Roland Rabitzsch</span>
<span class="t" id="t109" style="left:1698px;top:561.14px;font-size:12px;line-height:17px;color:#666;letter-spacing:0.010px;">Em Atendimento</span>
<div style="position:absolute;left:476px;top:658px;width:1352px;height:1px;background:#e2e2e2;"></div>
<div style="position:absolute;left:485px;top:617px;width:10px;height:10px;border:1px solid #a9a9a9;border-radius:2px;background:linear-gradient(#eeeeee,#dbdbdb);box-shadow:0 1px 1px rgba(0,0,0,0.12)"></div>
<div style="position:absolute;left:601px;top:614px;width:5px;height:28px;background:#1e88e5;border-radius:2.500px;"></div>
<span class="t" id="t110" style="left:511px;top:616.14px;font-size:12px;line-height:17px;color:#666;letter-spacing:0.020px;">877</span>
<span class="t" id="t111" style="left:631px;top:616.14px;font-size:12px;line-height:17px;color:#666;letter-spacing:-0.096px;">Sugestões</span>
<span class="t" id="t112" style="left:856px;top:616.14px;font-size:12px;line-height:17px;color:#666;letter-spacing:0.164px;">24/04/2018 09:32</span>
<span class="t" id="t113" style="left:991px;top:616.14px;font-size:12px;line-height:17px;color:#666;letter-spacing:0.110px;">Jonas</span>
<span class="t" id="t114" style="left:1698px;top:616.14px;font-size:12px;line-height:17px;color:#666;letter-spacing:-0.080px;">Novo</span>
<div style="position:absolute;left:476px;top:713px;width:1352px;height:1px;background:#e2e2e2;"></div>
<div style="position:absolute;left:485px;top:672px;width:10px;height:10px;border:1px solid #a9a9a9;border-radius:2px;background:linear-gradient(#eeeeee,#dbdbdb);box-shadow:0 1px 1px rgba(0,0,0,0.12)"></div>
<div style="position:absolute;left:601px;top:669px;width:5px;height:28px;background:#1e88e5;border-radius:2.500px;"></div>
<span class="t" id="t115" style="left:511px;top:671.14px;font-size:12px;line-height:17px;color:#666;letter-spacing:0.020px;">876</span>
<span class="t" id="t116" style="left:631px;top:671.14px;font-size:12px;line-height:17px;color:#666;letter-spacing:-0.096px;">Sugestões</span>
<span class="t" id="t117" style="left:856px;top:671.14px;font-size:12px;line-height:17px;color:#666;letter-spacing:0.164px;">24/04/2018 09:32</span>
<span class="t" id="t118" style="left:991px;top:671.14px;font-size:12px;line-height:17px;color:#666;letter-spacing:0.110px;">Jonas</span>
<span class="t" id="t119" style="left:1202px;top:671.14px;font-size:12px;line-height:17px;color:#666;letter-spacing:0.014px;">Projetos</span>
<span class="t" id="t120" style="left:1353px;top:671.14px;font-size:12px;line-height:17px;color:#666;letter-spacing:-0.151px;">Fulano</span>
<span class="t" id="t121" style="left:1563px;top:671.14px;font-size:12px;line-height:17px;color:#666;letter-spacing:0.025px;">Sugestão / Melhoria</span>
<span class="t" id="t122" style="left:1698px;top:671.14px;font-size:12px;line-height:17px;color:#666;letter-spacing:-0.048px;">Manutenção Corretiva</span>
<div style="position:absolute;left:485px;top:727px;width:10px;height:10px;border:1px solid #a9a9a9;border-radius:2px;background:linear-gradient(#eeeeee,#dbdbdb);box-shadow:0 1px 1px rgba(0,0,0,0.12)"></div>
<div style="position:absolute;left:601px;top:724px;width:5px;height:28px;background:#1e88e5;border-radius:2.500px;"></div>
<span class="t" id="t123" style="left:511px;top:726.14px;font-size:12px;line-height:17px;color:#666;letter-spacing:0.020px;">874</span>
<span class="t" id="t124" style="left:631px;top:726.14px;font-size:12px;line-height:17px;color:#666;letter-spacing:-0.096px;">Sugestões</span>
<span class="t" id="t125" style="left:856px;top:726.14px;font-size:12px;line-height:17px;color:#666;letter-spacing:0.164px;">23/04/2018 17:37</span>
<span class="t" id="t126" style="left:991px;top:726.14px;font-size:12px;line-height:17px;color:#666;letter-spacing:0.110px;">Jonas</span>
<span class="t" id="t127" style="left:1202px;top:726.14px;font-size:12px;line-height:17px;color:#666;letter-spacing:0.014px;">Projetos</span>
<span class="t" id="t128" style="left:1353px;top:726.14px;font-size:12px;line-height:17px;color:#666;letter-spacing:-0.151px;">Fulano</span>
<span class="t" id="t129" style="left:1563px;top:726.14px;font-size:12px;line-height:17px;color:#666;letter-spacing:0.025px;">Sugestão / Melhoria</span>
<span class="t" id="t130" style="left:1698px;top:726.14px;font-size:12px;line-height:17px;color:#666;letter-spacing:-0.048px;">Manutenção Corretiva</span>
</div>
<div style="position:absolute;left:1828px;top:222px;width:17px;height:742px;background:#f1f1f1;"></div>
<div style="position:absolute;left:1830px;top:239px;width:13px;height:41px;background:#c1c1c1;"></div>
<svg style="position:absolute;left:1832px;top:228px;" width="9" height="6" viewBox="0 0 9 6" fill="none"><polygon points="0.900,5 8.100,5 4.500,0.900" fill="#a3a3a3"/></svg>
<svg style="position:absolute;left:1832px;top:952px;" width="9" height="6" viewBox="0 0 9 6" fill="none"><polygon points="0.800,0.900 8.200,0.900 4.500,5.100" fill="#505050"/></svg>
</body></html>
